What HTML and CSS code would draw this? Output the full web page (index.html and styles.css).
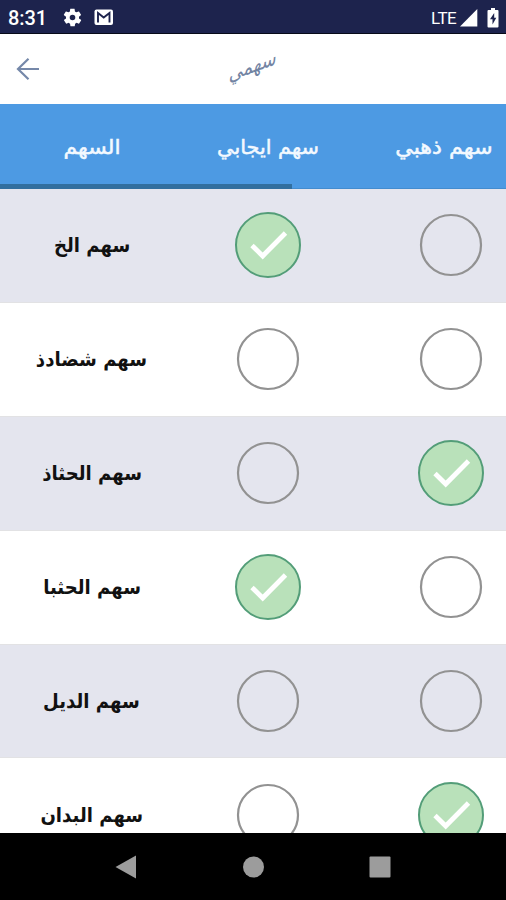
FILE: index.html
```html
<!DOCTYPE html>
<html lang="ar">
<head>
<meta charset="utf-8">
<title>سهمي</title>
<link rel="stylesheet" href="styles.css">
</head>
<body>
<svg class="defs" width="0" height="0">
  <symbol id="off" viewBox="0 0 68 68"><circle cx="34" cy="34" r="30" fill="none" stroke="#929292" stroke-width="2.2"/></symbol>
  <symbol id="on" viewBox="0 0 68 68"><circle cx="34" cy="34" r="32" fill="#b9e1ba" stroke="#539d78" stroke-width="2"/><path d="M18 34.5 28.700 45 51.500 22" fill="none" stroke="#fff" stroke-width="4.8"/></symbol>
</svg>
<div class="screen">
  <header class="status">
    <span class="time">8:31</span>
    <svg class="gear" width="21" height="21" viewBox="0 0 24 24"><path fill="#fff" d="M19.4 13a7.5 7.5 0 0 0 0-2l2.1-1.6c.2-.2.3-.5.1-.7l-2-3.4c-.1-.3-.4-.3-.6-.3l-2.500 1a7 7 0 0 0-1.700-1l-.4-2.600c0-.2-.2-.4-.5-.4h-4c-.2 0-.5.2-.5.400l-.4 2.600a7 7 0 0 0-1.700 1l-2.500-1c-.2 0-.5 0-.6.300l-2 3.400c-.1.2-.1.500.1.700L4.600 11a7.500 7.500 0 0 0 0 2l-2.100 1.600c-.2.200-.3.500-.1.700l2 3.400c.1.300.4.300.6.300l2.500-1a7 7 0 0 0 1.700 1l.4 2.600c0 .200.200.400.500.400h4c.2 0 .5-.2.500-.4l.4-2.600a7 7 0 0 0 1.700-1l2.500 1c.2 0 .5 0 .6-.300l2-3.400c.1-.2.100-.5-.1-.7zM12 15.200a3.200 3.200 0 1 1 0-6.400 3.200 3.200 0 0 1 0 6.400z"/></svg>
    <svg class="mail" width="20" height="17" viewBox="0 0 20 17"><rect x=".5" y=".5" width="18.500" height="15.500" rx="2" fill="#fff"/><path d="M4 13.500V4l5.700 4.500L15.500 4v9.500" fill="none" stroke="#1d234d" stroke-width="1.900"/></svg>
    <span class="lte">LTE</span>
    <svg class="signal" width="18" height="18" viewBox="0 0 18 18"><path d="M0 17.500 17.300 0v17.500z" fill="#fff"/></svg>
    <svg class="battery" width="12" height="20" viewBox="0 0 12 20"><path d="M4 0h4v2h2.500q1 0 1 1v15.500q0 1-1 1h-9q-1 0-1-1V3q0-1 1-1H4z" fill="#fff"/><path d="M7.200 5 3 11.300h2.500V16.500l3.800-6.700H7.200z" fill="#1d234d"/></svg>
  </header>
  <div class="appbar">
    <svg class="back" width="24" height="24" viewBox="0 0 24 24"><path d="M12.500 1.700 2 12l10.500 10.300M2 12h21" fill="none" stroke="#7588a9" stroke-width="2.200"/></svg>
    <h1>سهمي</h1>
  </div>
  <div class="grid head">
    <span class="share">السهم</span><span class="positive">سهم ايجابي</span><span class="gold">سهم ذهبي</span>
    <i class="scrollbar"></i>
  </div>
  <main class="rows">
    <div class="grid row"><span>سهم الخ</span><svg><use href="#on"/></svg><svg><use href="#off"/></svg></div>
    <div class="grid row"><span>سهم شضادذ</span><svg><use href="#off"/></svg><svg><use href="#off"/></svg></div>
    <div class="grid row"><span>سهم الحثاذ</span><svg><use href="#off"/></svg><svg><use href="#on"/></svg></div>
    <div class="grid row"><span>سهم الحثبا</span><svg><use href="#on"/></svg><svg><use href="#off"/></svg></div>
    <div class="grid row"><span>سهم الديل</span><svg><use href="#off"/></svg><svg><use href="#off"/></svg></div>
    <div class="grid row"><span>سهم البدان</span><svg><use href="#off"/></svg><svg><use href="#on"/></svg></div>
  </main>
  <nav class="navbar">
    <svg width="24" height="24" viewBox="0 0 24 24"><path d="M1.500 12 22 .5v23z" fill="#9c9c9c"/></svg>
    <svg width="24" height="24" viewBox="0 0 24 24"><circle cx="12.500" cy="12" r="10.500" fill="#9c9c9c"/></svg>
    <svg width="24" height="24" viewBox="0 0 24 24"><rect x="1.500" y="1.500" width="21" height="21" rx="1" fill="#9c9c9c"/></svg>
  </nav>
</div>
</body>
</html>
```
FILE: styles.css
```css
* { box-sizing: border-box; }
body { margin: 0; font-family: Roboto, "DejaVu Sans", sans-serif; background: #fff; }
svg { display: block; flex: none; }
.defs { position: absolute; }
.screen { height: 900px; display: flex; flex-direction: column; overflow: hidden; }
.status { height: 34px; flex: none; display: flex; align-items: center; padding: 2px 7px 0 8px; background: #1d234d; border-bottom: 1.5px solid #080a18; color: #fff; }
.time { width: 54px; font-size: 20px; font-weight: 500; letter-spacing: -.1px; }
.mail { margin-left: 11px; }
.lte { margin-left: auto; font-size: 17px; letter-spacing: -.6px; margin-right: 4px; }
.battery { margin: 0 0 0 9px; }
.appbar { height: 70px; flex: none; position: relative; display: flex; align-items: center; justify-content: center; background: #fff; }
.back { position: absolute; left: 16px; top: 23px; }
h1 { margin: 0 0 8px; color: #7384a3; font: 400 20px/30px "DejaVu Sans", sans-serif; transform: rotate(-20deg) skewX(-25deg) scaleX(.93); }
.grid { display: grid; grid-template-columns: 169.5px 183px 183px; align-items: center; justify-items: center; padding-left: 7px; width: 542.5px; flex: none; }
.head { height: 85px; padding-top: 1px; position: relative; background: #4d9ae3; color: #f3f9ff; font-family: "DejaVu Sans", sans-serif; font-size: 20px; -webkit-text-stroke: .5px #f3f9ff; border-bottom: 1px solid #438ccf; }
.share { transform: scaleX(1.100); }
.positive { transform: scaleX(1.040); }
.head .gold { margin-right: 14px; transform: scaleX(1.110); }
.scrollbar { position: absolute; left: 0; bottom: -1px; width: 292px; height: 5.500px; background: #326f9f; }
.rows { flex: 1; min-height: 0; overflow: hidden; }
.row { height: 113.900px; border-bottom: 1.5px solid #e2e2e4; color: #111; background: #fff; font-family: "DejaVu Sans", sans-serif; font-size: 20px; font-weight: 700; }
.row:nth-child(odd) { background: #e4e5ee; }
.row span { transform: scaleX(.905); }
.row svg { width: 68px; height: 68px; }
.navbar { height: 67px; flex: none; background: #000; display: flex; justify-content: space-between; align-items: center; padding: 0 114px; }
```
